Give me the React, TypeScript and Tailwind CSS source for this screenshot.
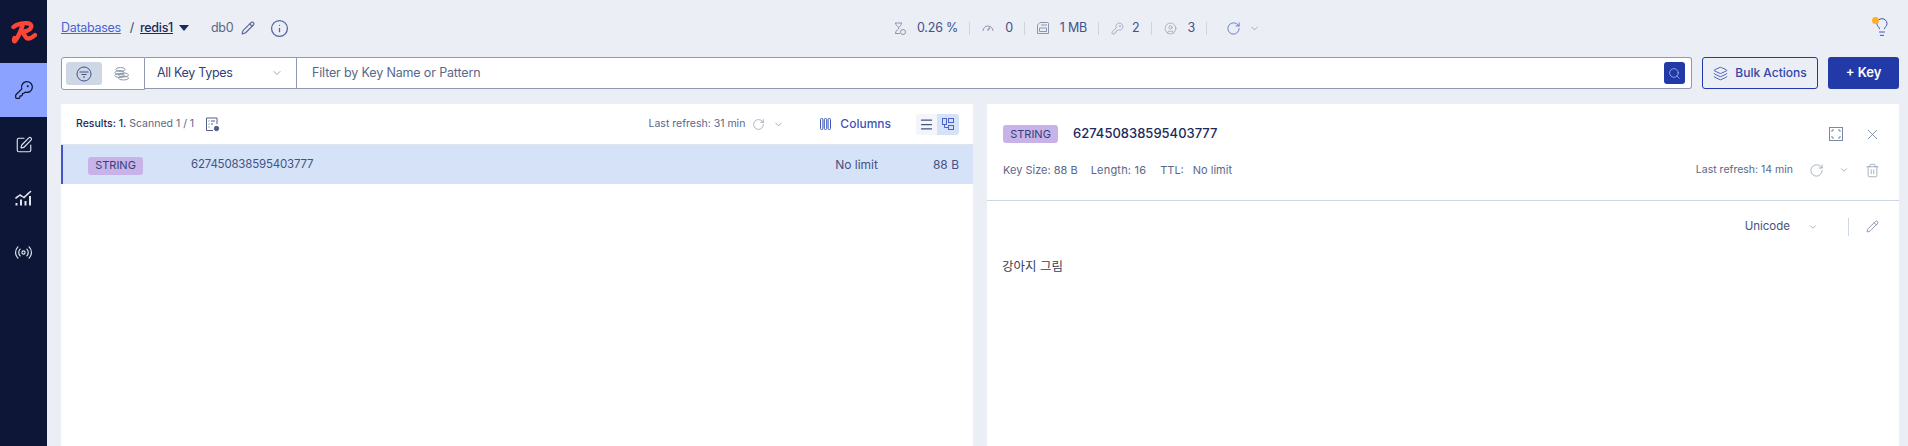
import React from 'react';
import {
  KeyRound, SquarePen, Radio, Pencil, Info, ChevronDown, X, Trash2, Layers, Search, RotateCw, Menu, CircleUser, Lightbulb,
} from 'lucide-react';

const font = { fontFamily: 'Inter, "Noto Sans CJK KR", sans-serif' };

const Logo = () => (
  <svg width="26" height="26" viewBox="0 0 26 26" fill="none" stroke="#ff4438" strokeWidth="4.4" strokeLinecap="round" strokeLinejoin="round">
    <path d="M2.5 7 C6 3.5 14 2.5 18 3.5 C22 4.8 20.5 9.5 15.5 11 L10.5 12" />
    <path d="M11.5 5.5 C10 10 8 16 4.5 20.5 C3 22.5 2.5 20 3.5 18" />
    <path d="M10.5 12 C13.5 13 14 18.5 17 18.5 C19.5 18.5 22 17 24 15" />
  </svg>
);

const AnalysisIcon = () => (
  <svg width="17" height="17" viewBox="0 0 17 17" fill="none" stroke="#dfe5ef" strokeWidth="1.6" strokeLinecap="round">
    <path d="M1 8 L5 5 L9 7.5 L15.5 1.5" strokeDasharray="3 1.5" />
    <path d="M1.5 13 V15.5 M6 9.5 V15.5 M10.5 11 V15.5 M15 6 V15.5" strokeWidth="2" strokeLinecap="butt" />
  </svg>
);

const FilterIcon = () => (
  <svg width="16" height="16" viewBox="0 0 16 16" fill="none" stroke="#465282" strokeWidth="1">
    <circle cx="8" cy="8" r="7" />
    <path d="M3.5 6 H12.5 M5.5 8.5 H10.5 M7 11 H9" />
  </svg>
);

const CoinsIcon = () => (
  <svg width="16" height="14" viewBox="0 0 16 14" fill="none" stroke="#8c97ad" strokeWidth="1">
    <ellipse cx="6.5" cy="2.5" rx="4.5" ry="2" />
    <ellipse cx="5.5" cy="5.5" rx="4.5" ry="2" />
    <ellipse cx="5.5" cy="8.5" rx="4.5" ry="2" />
    <ellipse cx="9.5" cy="8" rx="5" ry="2" />
    <ellipse cx="9.5" cy="11" rx="5" ry="2" />
  </svg>
);

const TreeIcon = () => (
  <svg width="14" height="14" viewBox="0 0 14 14" fill="none" stroke="#4a63d0" strokeWidth="1">
    <rect x="1.5" y="1.5" width="4" height="6" />
    <rect x="7.5" y="1.5" width="5" height="4" />
    <rect x="7.5" y="8.5" width="5" height="4" />
    <path d="M3.5 7.5 V10.5 H7.5" />
  </svg>
);

const ConfigIcon = () => (
  <svg width="15" height="15" viewBox="0 0 15 15" fill="none" stroke="#51608c" strokeWidth="1">
    <path d="M8 13.5 H1.5 V1 H12 V7" />
    <path d="M3.5 4 H4.5 M6 4 H10 M3.5 7 H4.5 M6 7 H8 M3.5 10 H4.5" />
    <circle cx="11.5" cy="11.5" r="2.2" fill="#51608c" />
  </svg>
);

const CpuIcon = () => (
  <svg width="12" height="13" viewBox="0 0 12 13" fill="none" stroke="#8c97ad" strokeWidth="1">
    <path d="M1 1 H8 M1 11.5 H6 M1.5 1 C1.5 4 5 4.5 5 6 C5 7.5 1.5 8 1.5 11.5 M7.5 1 C7.5 3 5.5 4.5 5 5.5" />
    <circle cx="9" cy="10" r="2.5" />
  </svg>
);

const GaugeIcon = () => (
  <svg width="12" height="8" viewBox="0 0 12 8" fill="none" stroke="#8c97ad" strokeWidth="1">
    <path d="M1 7 A5 5 0 0 1 11 7" />
    <path d="M5.5 6.5 L8 3.5" strokeWidth="1.3" />
  </svg>
);

const MemoryIcon = () => (
  <svg width="12" height="12" viewBox="0 0 12 12" fill="none" stroke="#8c97ad" strokeWidth="1">
    <path d="M3 .5 H10.5 Q11.5 .5 11.5 1.5 V11.5 H.5 V3 Z" />
    <path d="M2.5 6 H9.5 V9.5 H2.5 Z M5 2 V4 M7 2 V4 M9 2 V4" />
  </svg>
);

const ColumnsIcon = () => (
  <svg width="11" height="12" viewBox="0 0 11 12" fill="none" stroke="#3f55b8" strokeWidth="1">
    <rect x=".5" y=".5" width="2.4" height="11" rx="1" />
    <rect x="4.3" y=".5" width="2.4" height="11" rx="1" />
    <rect x="8.1" y=".5" width="2.4" height="11" rx="1" />
  </svg>
);

const ExpandIcon = () => (
  <svg width="14" height="14" viewBox="0 0 14 14" fill="none" stroke="#7a88a8" strokeWidth="1">
    <rect x=".5" y=".5" width="13" height="13" />
    <path d="M3 5 V3 H5 M9 3 H11 V5 M11 9 V11 H9 M5 11 H3 V9" />
  </svg>
);

const Badge = () => (
  <span className="flex h-[18px] w-[55px] items-center justify-center rounded-[3px] bg-[#c8b3e9] text-[11px] text-[#343f7a]">STRING</span>
);

const Divider = () => <div className="ml-[11px] mr-[12px] h-[13px] w-px bg-[#ced3de]" />;

const NavItem = ({ children, active }: { children: React.ReactNode; active?: boolean }) => (
  <div className={`flex h-[54px] w-full items-center justify-center ${active ? 'bg-[#8ba2ff]' : ''}`}>{children}</div>
);

const Stat = ({ icon, value, tight }: { icon: React.ReactNode; value: string; tight?: boolean }) => (
  <div className={`flex items-center ${tight ? 'gap-[8px]' : 'gap-[11px]'}`}>
    {icon}
    <span className="text-[12.5px] tracking-[-0.2px] text-[#42518a]">{value}</span>
  </div>
);

export default function App() {
  return (
    <div className="flex h-[446px] w-[1908px] overflow-hidden bg-[#ebeef5]" style={font}>
      <aside className="flex h-full w-[47px] shrink-0 flex-col bg-[#0d1636]">
        <div className="flex h-[63px] items-center justify-center pt-[3px]"><Logo /></div>
        <NavItem active><KeyRound size={20} color="#0d1636" strokeWidth={1.5} /></NavItem>
        <NavItem><SquarePen size={18} color="#dfe5ef" strokeWidth={1.5} className="mt-[2px]" /></NavItem>
        <NavItem><AnalysisIcon /></NavItem>
        <NavItem><Radio size={19} color="#dfe5ef" strokeWidth={1.5} /></NavItem>
      </aside>

      <main className="flex min-w-0 flex-1 flex-col pl-[14px] pr-[9px]">
        <header className="flex h-[57px] shrink-0 items-center pb-[1px]">
          <div className="flex w-[833px] items-center text-[12.5px] tracking-[-0.3px]">
            <span className="text-[#4a63d0] underline">Databases</span>
            <span className="ml-[9px] mr-[6px] text-[#343f7a]">/</span>
            <span className="font-medium text-[#1c2a5c] underline">redis1</span>
            <span className="ml-[6px] h-0 w-0 border-x-[5px] border-t-[6px] border-x-transparent border-t-[#1c2a5c]" />
            <span className="ml-[22px] text-[#5a6788]">db0</span>
            <Pencil size={14} color="#5a6a94" className="ml-[8px]" />
            <Info size={19} color="#51669e" strokeWidth={1.6} className="ml-[15px]" />
          </div>
          <div className="flex items-center">
            <Stat icon={<CpuIcon />} value="0.26 %" />
            <Divider />
            <Stat icon={<GaugeIcon />} value="0" />
            <Divider />
            <Stat icon={<MemoryIcon />} value="1 MB" />
            <Divider />
            <Stat tight icon={<KeyRound size={13} color="#8c97ad" strokeWidth={1.3} />} value="2" />
            <Divider />
            <Stat icon={<CircleUser size={13} color="#8c97ad" strokeWidth={1.2} />} value="3" />
            <Divider />
            <RotateCw size={15} color="#4a63d0" strokeWidth={1.3} className="ml-[7px]" />
            <ChevronDown size={11} color="#9aa5bc" className="ml-[8px]" />
          </div>
          <div className="relative ml-auto mr-[7px] -mt-[3px] flex h-[20px] w-[20px] items-center justify-center">
            <Lightbulb size={20} color="#3f55b8" strokeWidth={1.2} />
            <span className="absolute left-0 top-0 h-[7px] w-[7px] rounded-full bg-[#ffaf2e]" />
          </div>
        </header>

        <div className="flex h-[33px] shrink-0 items-stretch">
          <div className="flex w-[84px] items-center gap-[5px] rounded-l-[3px] border border-[#9098b2] bg-white pl-[4px]">
            <div className="flex h-[23px] w-[36px] items-center justify-center rounded-[3px] bg-[#cdd7e6]"><FilterIcon /></div>
            <div className="flex h-[23px] w-[30px] items-center justify-center"><CoinsIcon /></div>
          </div>
          <div className="flex h-[32px] w-[152px] items-center justify-between border border-l-0 border-[#9098b2] bg-white pl-[12px] pr-[13px]">
            <span className="text-[12.5px] tracking-[-0.3px] text-[#343f7a]">All Key Types</span>
            <ChevronDown size={12} color="#9aa5bc" />
          </div>
          <div className="flex h-[32px] flex-1 items-center justify-between rounded-r-[3px] border border-l-0 border-[#9098b2] bg-white pl-[15px] pr-[6px]">
            <span className="text-[12.5px] tracking-[-0.15px] text-[#5a6788]">Filter by Key Name or Pattern</span>
            <div className="flex h-[22px] w-[21px] items-center justify-center rounded-[3px] bg-[#213aa8]"><Search size={13} color="#c8d3ee" strokeWidth={1.2} /></div>
          </div>
          <button className="ml-[10px] flex h-[32px] w-[116px] items-center justify-center gap-[7px] rounded-[3px] border border-[#213aa8] text-[12px] font-medium text-[#3146a8]">
            <Layers size={15} strokeWidth={1.3} />
            Bulk Actions
          </button>
          <button className="ml-[10px] h-[32px] w-[71px] rounded-[3px] bg-[#213aa8] text-[13px] font-semibold text-white">+ Key</button>
        </div>

        <div className="mt-[14px] flex min-h-0 flex-1 gap-[14px]">
          <section className="flex w-[912px] shrink-0 flex-col bg-white">
            <div className="flex h-[41px] shrink-0 items-center border-b border-[#dfe5ef] pl-[15px] pr-[14px]">
              <span className="text-[10.5px] font-medium text-[#1c2a5c]">Results: 1.</span>
              <span className="ml-[3px] text-[10.5px] text-[#5a6788]">Scanned 1 / 1</span>
              <span className="ml-[11px]"><ConfigIcon /></span>
              <span className="ml-auto text-[10.5px] text-[#5a6788]">Last refresh: 31 min</span>
              <RotateCw size={13} color="#8c97ad" strokeWidth={1.3} className="ml-[7px]" />
              <ChevronDown size={11} color="#9aa5bc" className="ml-[8px]" />
              <span className="ml-[36px]"><ColumnsIcon /></span>
              <span className="ml-[9px] text-[12px] font-medium text-[#3f55b8]">Columns</span>
              <div className="ml-[25px] flex">
                <div className="flex h-[21px] w-[21px] items-center justify-center rounded-l-[3px] bg-[#f3f5f9]"><Menu size={15} color="#465282" /></div>
                <div className="flex h-[21px] w-[22px] items-center justify-center rounded-r-[3px] bg-[#d6e2f8]"><TreeIcon /></div>
              </div>
            </div>
            <div className="flex h-[39px] shrink-0 items-center border-l-2 border-[#3f55c8] bg-[#d6e2f8] pl-[25px] pr-[14px] text-[12px] text-[#465282]">
              <div className="mt-[2px]"><Badge /></div>
              <span className="ml-[48px] text-[11.5px] tracking-[-0.2px]">627450838595403777</span>
              <span className="ml-auto">No limit</span>
              <span className="ml-[55px]">88 B</span>
            </div>
          </section>

          <section className="flex min-w-0 flex-1 flex-col bg-white">
            <div className="h-[97px] shrink-0 border-b border-[#cdd7e6] px-[16px]">
              <div className="mt-[9px] flex h-[42px] items-center">
                <Badge />
                <span className="ml-[15px] text-[13px] font-medium text-[#1c2a5c]">627450838595403777</span>
                <span className="ml-auto mr-[21px]"><ExpandIcon /></span>
                <X size={17} color="#5a6a94" strokeWidth={1} className="mr-[2px]" />
              </div>
              <div className="mt-[7px] flex h-[16px] items-center text-[11px] text-[#5a6788]">
                <span>Key Size: 88 B</span>
                <span className="ml-[13px] tracking-[0.2px]">Length: 16</span>
                <span className="ml-[14px]">TTL:</span>
                <span className="ml-[9px]">No limit</span>
                <span className="ml-auto text-[10.5px]">Last refresh: 14 min</span>
                <RotateCw size={15} color="#8c97ad" strokeWidth={1.2} className="ml-[16px]" />
                <ChevronDown size={10} color="#9aa5bc" className="ml-[15px]" />
                <Trash2 size={15} color="#8c97ad" strokeWidth={1.2} className="ml-[16px] mr-[3px]" />
              </div>
            </div>
            <div className="flex h-[51px] shrink-0 items-center justify-end pr-[20px]">
              <span className="text-[11.5px] text-[#465282]">Unicode</span>
              <ChevronDown size={10} color="#9aa5bc" className="ml-[18px]" />
              <div className="ml-[30px] h-[18px] w-px bg-[#cdd7e6]" />
              <Pencil size={13} color="#6a7aa0" strokeWidth={1.4} className="ml-[17px]" />
            </div>
            <p className="mt-[7px] pl-[15px] text-[12.5px] leading-[16px] text-[#343f5c]">강아지 그림</p>
          </section>
        </div>
      </main>
    </div>
  );
}
